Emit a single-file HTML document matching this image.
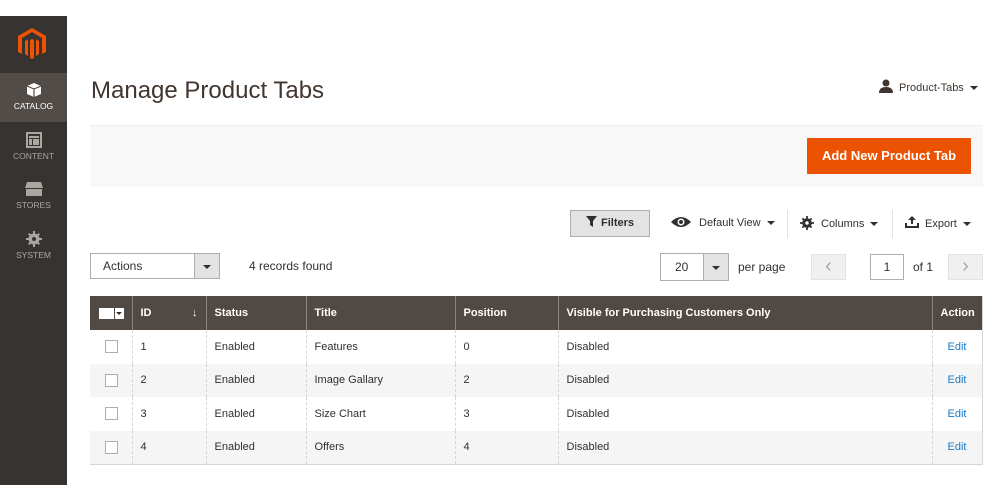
<!DOCTYPE html>
<html><head><meta charset="utf-8"><style>
*{box-sizing:border-box;margin:0;padding:0}
body{width:1000px;height:500px;background:#fff;font-family:"Liberation Sans",sans-serif;color:#303030;position:relative;overflow:hidden;font-size:12px}
.abs{position:absolute}
.sb{left:0;top:16px;width:67px;height:469px;background:#373330}
.nav{position:absolute;left:0;width:67px;text-align:center;color:#aaa6a0;font-size:8.5px}
.nav svg{display:block;margin:0 auto 3px}
.btn{border:1px solid #adadad;background:#e3e3e3}
th{background:#514943;color:#fff;font-weight:bold;text-align:left;height:34px;padding-left:8px;border-left:1px solid #8a837f;font-size:11px}
td{height:33.5px;padding-left:8px;border-left:1px dashed #d6d6d6;font-size:11px}
tr.alt td{background:#f5f5f5}
table{border-collapse:collapse;position:absolute;left:90px;top:296px;width:893px;border-bottom:1px solid #d6d6d6;border-right:1px solid #d6d6d6}
.cb{display:inline-block;width:13px;height:13px;border:1px solid #adadad;background:#fff;margin-left:7px;vertical-align:middle}
a{color:#1979c3;text-decoration:none}
.tri{display:inline-block;width:0;height:0;border-left:4px solid transparent;border-right:4px solid transparent;border-top:4px solid #303030;vertical-align:middle;margin-left:6px}
.atri{position:absolute;left:8px;top:11px;width:0;height:0;border-left:4px solid transparent;border-right:4px solid transparent;border-top:4px solid #303030}
</style></head><body>
<div class="abs sb"></div>
<svg class="abs" style="left:18px;top:28px" width="28" height="32" viewBox="0 0 28 32"><path d="M14 0L28 8V24L24 26V10L14 4L4 10V26L0 24V8Z M12 12L14 11L16 12V30L14 31L12 30Z M7 13L10 11.5V28L7 26Z M21 13L18 11.5V28L21 26Z" fill="#eb5202"/></svg>
<div class="abs" style="left:0;top:73px;width:67px;height:49px;background:#524c48"></div>
<div class="nav" style="top:82px;color:#fff"><svg width="16" height="16" viewBox="0 0 16 16"><path d="M8 1L15 4V12L8 15L1 12V4Z" fill="#fff"/><path d="M1 4L8 7L15 4M8 7V15" stroke="#524c48" stroke-width="1.2" fill="none"/></svg>CATALOG</div>
<div class="nav" style="top:132px"><svg width="16" height="16" viewBox="0 0 16 16"><rect x="1" y="1" width="14" height="14" fill="none" stroke="#aaa6a0" stroke-width="2"/><rect x="3" y="4" width="10" height="2" fill="#aaa6a0"/><rect x="3" y="7" width="3" height="6" fill="#aaa6a0"/><rect x="7" y="7" width="6" height="6" fill="#aaa6a0"/></svg>CONTENT</div>
<div class="nav" style="top:181px"><svg width="18" height="16" viewBox="0 0 18 16"><path d="M2 1H16L18 7H0Z M1 8H17V15H1Z" fill="#aaa6a0"/></svg>STORES</div>
<div class="nav" style="top:231px"><svg width="16" height="16" viewBox="0 0 16 16"><circle cx="8" cy="8" r="5.5" fill="#aaa6a0"/><path d="M7 0H9V16H7Z M0 7H16V9H0Z M2 3.4L3.4 2L14 12.6L12.6 14Z M12.6 2L14 3.4L3.4 14L2 12.6Z" fill="#aaa6a0"/><circle cx="8" cy="8" r="2" fill="#373330"/></svg>SYSTEM</div>

<div class="abs" style="left:91px;top:77px;font-size:24px;color:#41362f">Manage Product Tabs</div>
<div class="abs" style="left:878px;top:79px;font-size:11px;color:#41362f"><svg width="16" height="14" viewBox="0 0 16 14" style="vertical-align:-2px;margin-right:5px"><circle cx="8" cy="4" r="3.5" fill="#41362f"/><path d="M1 14Q1 8 8 8Q15 8 15 14Z" fill="#41362f"/></svg>Product-Tabs<span class="tri"></span></div>
<div class="abs" style="left:90px;top:125px;width:893px;height:62px;background:#f8f8f8;border-top:1px solid #eee"></div>
<div class="abs" style="left:807px;top:138px;width:164px;height:36px;background:#eb5202;color:#fff;font-weight:bold;font-size:13px;text-align:center;line-height:36px">Add New Product Tab</div>

<div class="abs btn" style="left:570px;top:210px;width:80px;height:27px;font-weight:bold;font-size:11px;line-height:25px;text-align:center"><svg width="11" height="11" viewBox="0 0 11 11" style="vertical-align:-1px;margin-right:4px"><path d="M0 0H11L7 5V11L4 9V5Z" fill="#303030"/></svg>Filters</div>
<div class="abs" style="left:671px;top:216px;font-size:11px"><svg width="20" height="12" viewBox="0 0 20 12" style="vertical-align:-2px;margin-right:8px"><path d="M0 6Q10 -4 20 6Q10 16 0 6Z" fill="#303030"/><circle cx="10" cy="6" r="3.5" fill="#fff"/><circle cx="10" cy="6" r="2" fill="#303030"/></svg>Default View<span class="tri"></span></div>
<div class="abs" style="left:787px;top:210px;width:1px;height:28px;background:#e3e3e3"></div>
<div class="abs" style="left:800px;top:216px;font-size:11px"><svg width="14" height="14" viewBox="0 0 16 16" style="vertical-align:-3px;margin-right:7px"><circle cx="8" cy="8" r="5.5" fill="#303030"/><path d="M7 0H9V16H7Z M0 7H16V9H0Z M2 3.4L3.4 2L14 12.6L12.6 14Z M12.6 2L14 3.4L3.4 14L2 12.6Z" fill="#303030"/><circle cx="8" cy="8" r="2" fill="#fff"/></svg>Columns<span class="tri"></span></div>
<div class="abs" style="left:892px;top:210px;width:1px;height:28px;background:#e3e3e3"></div>
<div class="abs" style="left:905px;top:216px;font-size:11px"><svg width="14" height="12" viewBox="0 0 14 12" style="vertical-align:-1px;margin-right:6px"><path d="M7 0L11 4H8V8H6V4H3Z M0 7H2V10H12V7H14V12H0Z" fill="#303030"/></svg>Export<span class="tri"></span></div>

<div class="abs" style="left:90px;top:253px;width:130px;height:26px;border:1px solid #adadad;font-size:12px;line-height:24px;padding-left:12px">Actions</div>
<div class="abs btn" style="left:194px;top:253px;width:26px;height:26px"><span class="atri"></span></div>
<div class="abs" style="left:249px;top:259px;font-size:12px">4 records found</div>

<div class="abs" style="left:660px;top:253px;width:69px;height:28px;border:1px solid #adadad;font-size:12px;line-height:26px;padding-left:14px">20</div>
<div class="abs btn" style="left:703px;top:253px;width:26px;height:28px"><span class="atri" style="top:12px"></span></div>
<div class="abs" style="left:738px;top:260px;font-size:12px">per page</div>
<div class="abs" style="left:811px;top:254px;width:35px;height:26px;background:#f0f0f0;border:1px solid #e3e3e3;color:#aaa;text-align:center;line-height:22px;font-size:20px">&lsaquo;</div>
<div class="abs" style="left:870px;top:254px;width:34px;height:26px;border:1px solid #adadad;text-align:center;line-height:24px;font-size:12px">1</div>
<div class="abs" style="left:913px;top:260px;font-size:12px">of 1</div>
<div class="abs" style="left:948px;top:254px;width:35px;height:26px;background:#f0f0f0;border:1px solid #e3e3e3;color:#aaa;text-align:center;line-height:22px;font-size:20px">&rsaquo;</div>

<table>
<tr><th style="width:42px;padding-left:9px;border-left:none"><span style="display:inline-block;width:15px;height:11px;background:#fff;vertical-align:middle"></span><span style="display:inline-block;width:9px;height:11px;background:#fff;vertical-align:middle;margin-left:1px;position:relative"><span style="position:absolute;left:1px;top:4px;width:0;height:0;border-left:3px solid transparent;border-right:3px solid transparent;border-top:3px solid #303030"></span></span></th>
<th style="width:74px">ID<span style="float:right;margin-right:8px;font-weight:normal">&darr;</span></th><th style="width:100px">Status</th><th style="width:149px">Title</th><th style="width:103px">Position</th><th style="width:374px">Visible for Purchasing Customers Only</th><th>Action</th></tr>
<tr><td style="border-left:none"><span class="cb"></span></td><td>1</td><td>Enabled</td><td>Features</td><td>0</td><td>Disabled</td><td style="padding-left:15px"><a>Edit</a></td></tr>
<tr class="alt"><td style="border-left:none"><span class="cb"></span></td><td>2</td><td>Enabled</td><td>Image Gallary</td><td>2</td><td>Disabled</td><td style="padding-left:15px"><a>Edit</a></td></tr>
<tr><td style="border-left:none"><span class="cb"></span></td><td>3</td><td>Enabled</td><td>Size Chart</td><td>3</td><td>Disabled</td><td style="padding-left:15px"><a>Edit</a></td></tr>
<tr class="alt"><td style="border-left:none"><span class="cb"></span></td><td>4</td><td>Enabled</td><td>Offers</td><td>4</td><td>Disabled</td><td style="padding-left:15px"><a>Edit</a></td></tr>
</table>
</body></html>
